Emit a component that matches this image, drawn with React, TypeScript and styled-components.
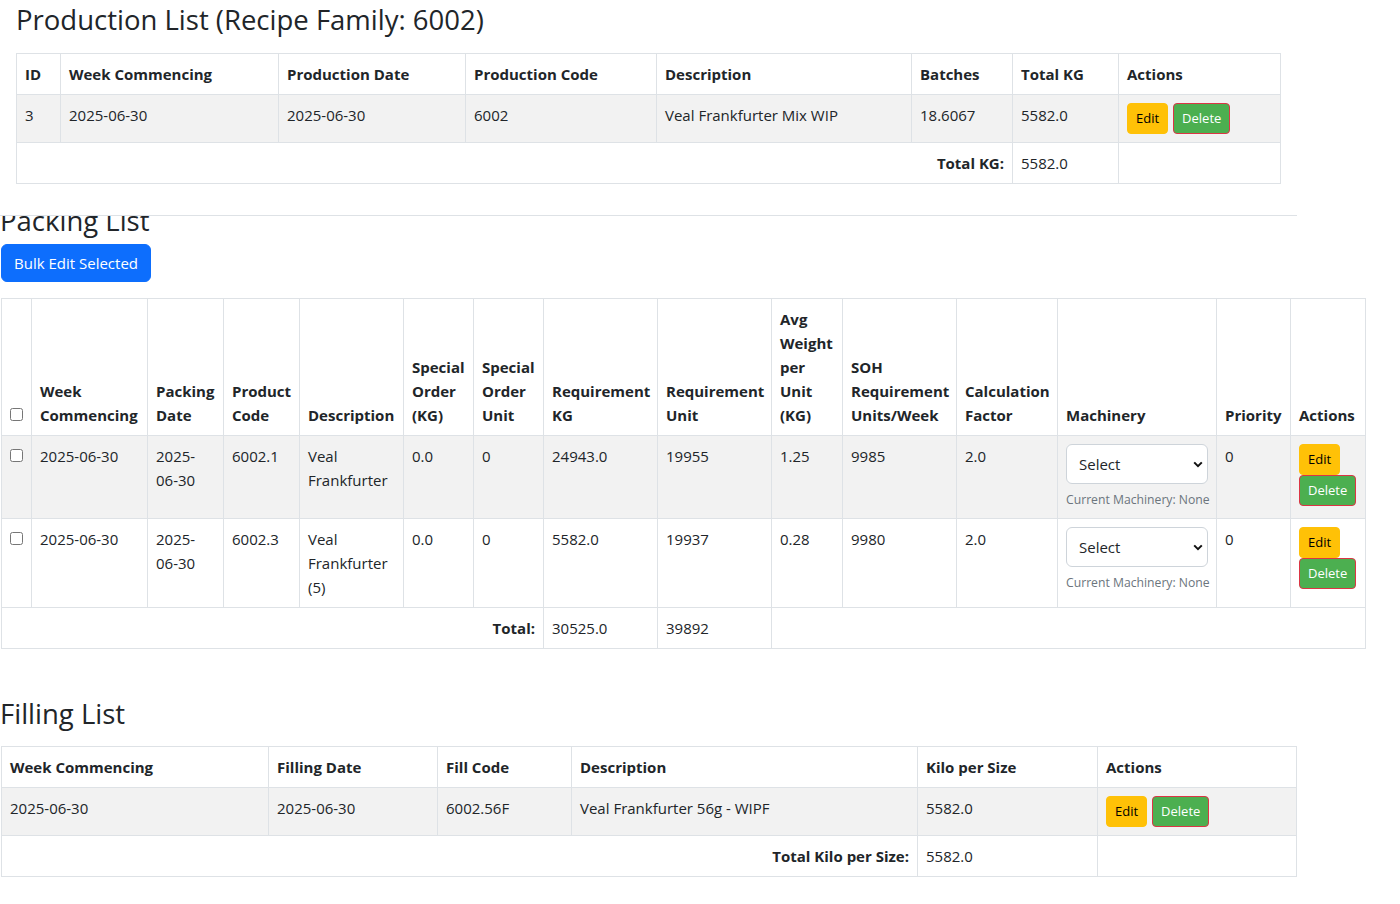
import React from "react";
import styled, { createGlobalStyle } from "styled-components";

const GlobalStyle = createGlobalStyle`
  *, *::before, *::after { box-sizing: border-box; }
  html, body { margin: 0; padding: 0; background: #fff; }
  body {
    font-family: "Open Sans", "Noto Sans", sans-serif;
    font-size: 15px;
    line-height: 1.5;
    color: #212529;
  }
`;

const Page = styled.div`
  width: 1400px;
`;

const ProductionSection = styled.section`
  width: 1297px;
  padding: 3px 16px 31px 16px;
  border-bottom: 1px solid #dee2e6;
`;

const Title = styled.h2<{ $mt?: number; $mb?: number }>`
  margin: ${(p) => p.$mt ?? 0}px 0 ${(p) => p.$mb ?? 0}px;
  font-size: 27.5px;
  font-weight: 500;
  line-height: 34px;
  color: #212529;
`;

const HeadingClip = styled.div`
  height: 22px;
  overflow: hidden;
  margin-left: -1px;
`;

const PackingSection = styled.section`
  padding-left: 1px;
`;

const FillingSection = styled.section`
  padding-left: 1px;
`;

const FillingTitleWrap = styled.div`
  margin-left: -1px;
`;

const PrimaryButton = styled.button`
  display: inline-block;
  margin-top: 6px;
  padding: 6px 12px;
  font-family: inherit;
  font-size: 15px;
  line-height: 24px;
  color: #fff;
  background: #0d6efd;
  border: 1px solid #0d6efd;
  border-radius: 6px;
`;

const Table = styled.table<{ $width: number; $mt?: number }>`
  width: ${(p) => p.$width}px;
  margin-top: ${(p) => p.$mt ?? 0}px;
  border-collapse: collapse;
  table-layout: fixed;
`;

const Col = styled.col<{ $w: number }>`
  width: ${(p) => p.$w}px;
`;

const Row = styled.tr<{ $striped?: boolean }>`
  background: ${(p) => (p.$striped ? "#f2f2f2" : "#fff")};
`;

const Th = styled.th`
  border: 1px solid #dee2e6;
  padding: 8px;
  text-align: left;
  vertical-align: bottom;
  font-weight: 700;
  line-height: 24px;
`;

const Td = styled.td<{ $right?: boolean; $bold?: boolean }>`
  border: 1px solid #dee2e6;
  padding: 8px;
  vertical-align: top;
  line-height: 24px;
  text-align: ${(p) => (p.$right ? "right" : "left")};
  font-weight: ${(p) => (p.$bold ? 700 : 400)};
`;

const Checkbox = styled.input.attrs({ type: "checkbox" })`
  margin: 0;
  width: 13px;
  height: 13px;
`;

const Actions = styled.div`
  display: flex;
  flex-wrap: wrap;
  column-gap: 5px;
  align-items: flex-start;
`;

const SmallButton = styled.button<{ $variant: "edit" | "delete" }>`
  padding: 4px 8px;
  font-family: inherit;
  font-size: 13px;
  line-height: 21px;
  border-radius: 4px;
  border: 1px solid ${(p) => (p.$variant === "edit" ? "#ffc107" : "#dc3545")};
  background: ${(p) => (p.$variant === "edit" ? "#ffc107" : "#4caf50")};
  color: ${(p) => (p.$variant === "edit" ? "#000" : "#fff")};
`;

const SelectWrap = styled.div`
  position: relative;
`;

const Select = styled.select`
  appearance: none;
  -webkit-appearance: none;
  display: block;
  width: 100%;
  height: 40px;
  padding: 0 32px 0 12px;
  font-family: inherit;
  font-size: 15px;
  color: #212529;
  background: #fff;
  border: 1px solid #ced4da;
  border-radius: 6px;
`;

const Chevron = styled.svg`
  position: absolute;
  right: 5px;
  top: 17px;
  pointer-events: none;
`;

const HelpText = styled.div`
  margin-top: 5px;
  font-size: 12.2px;
  line-height: 21px;
  white-space: nowrap;
  color: #6c757d;
`;

const productionCols = [44, 218, 187, 191, 255, 101, 106, 162];
const packingCols = [30, 116, 76, 76, 104, 70, 70, 114, 114, 71, 114, 101, 159, 74, 75];
const fillingCols = [267, 169, 134, 346, 180, 199];

const ActionButtons = () => (
  <Actions>
    <SmallButton $variant="edit">Edit</SmallButton>
    <SmallButton $variant="delete">Delete</SmallButton>
  </Actions>
);

const MachinerySelect = () => (
  <>
    <SelectWrap>
      <Select defaultValue="">
        <option value="">Select</option>
      </Select>
      <Chevron width="10" height="7" viewBox="0 0 10 7">
        <path d="M1.2 1.4 L5 5.2 L8.8 1.4" fill="none" stroke="#111" strokeWidth="2" />
      </Chevron>
    </SelectWrap>
    <HelpText>Current Machinery: None</HelpText>
  </>
);

const packingRows = [
  {
    week: "2025-06-30",
    date: "2025-06-30",
    code: "6002.1",
    desc: "Veal Frankfurter",
    soKg: "0.0",
    soUnit: "0",
    reqKg: "24943.0",
    reqUnit: "19955",
    avg: "1.25",
    soh: "9985",
    calc: "2.0",
    priority: "0",
  },
  {
    week: "2025-06-30",
    date: "2025-06-30",
    code: "6002.3",
    desc: "Veal Frankfurter (5)",
    soKg: "0.0",
    soUnit: "0",
    reqKg: "5582.0",
    reqUnit: "19937",
    avg: "0.28",
    soh: "9980",
    calc: "2.0",
    priority: "0",
  },
];

export default function App() {
  return (
    <Page>
      <GlobalStyle />
      <ProductionSection>
        <Title $mb={16}>Production List (Recipe Family: 6002)</Title>
        <Table $width={1264}>
          <colgroup>
            {productionCols.map((w, i) => (
              <Col key={i} $w={w} />
            ))}
          </colgroup>
          <thead>
            <Row>
              <Th>ID</Th>
              <Th>Week Commencing</Th>
              <Th>Production Date</Th>
              <Th>Production Code</Th>
              <Th>Description</Th>
              <Th>Batches</Th>
              <Th>Total KG</Th>
              <Th>Actions</Th>
            </Row>
          </thead>
          <tbody>
            <Row $striped>
              <Td>3</Td>
              <Td>2025-06-30</Td>
              <Td>2025-06-30</Td>
              <Td>6002</Td>
              <Td>Veal Frankfurter Mix WIP</Td>
              <Td>18.6067</Td>
              <Td>5582.0</Td>
              <Td>
                <ActionButtons />
              </Td>
            </Row>
          </tbody>
          <tfoot>
            <Row>
              <Td colSpan={6} $right $bold>
                Total KG:
              </Td>
              <Td>5582.0</Td>
              <Td />
            </Row>
          </tfoot>
        </Table>
      </ProductionSection>

      <PackingSection>
        <HeadingClip>
          <Title $mt={-12}>Packing List</Title>
        </HeadingClip>
        <PrimaryButton>Bulk Edit Selected</PrimaryButton>
        <Table $width={1364} $mt={16}>
          <colgroup>
            {packingCols.map((w, i) => (
              <Col key={i} $w={w} />
            ))}
          </colgroup>
          <thead>
            <Row>
              <Th>
                <Checkbox />
              </Th>
              <Th>Week Commencing</Th>
              <Th>Packing Date</Th>
              <Th>Product Code</Th>
              <Th>Description</Th>
              <Th>Special Order (KG)</Th>
              <Th>Special Order Unit</Th>
              <Th>Requirement KG</Th>
              <Th>Requirement Unit</Th>
              <Th>Avg Weight per Unit (KG)</Th>
              <Th>SOH Requirement Units/Week</Th>
              <Th>Calculation Factor</Th>
              <Th>Machinery</Th>
              <Th>Priority</Th>
              <Th>Actions</Th>
            </Row>
          </thead>
          <tbody>
            {packingRows.map((r, i) => (
              <Row key={i} $striped={i % 2 === 0}>
                <Td>
                  <Checkbox />
                </Td>
                <Td>{r.week}</Td>
                <Td>{r.date}</Td>
                <Td>{r.code}</Td>
                <Td>{r.desc}</Td>
                <Td>{r.soKg}</Td>
                <Td>{r.soUnit}</Td>
                <Td>{r.reqKg}</Td>
                <Td>{r.reqUnit}</Td>
                <Td>{r.avg}</Td>
                <Td>{r.soh}</Td>
                <Td>{r.calc}</Td>
                <Td>
                  <MachinerySelect />
                </Td>
                <Td>{r.priority}</Td>
                <Td>
                  <ActionButtons />
                </Td>
              </Row>
            ))}
          </tbody>
          <tfoot>
            <Row>
              <Td colSpan={7} $right $bold>
                Total:
              </Td>
              <Td>30525.0</Td>
              <Td>39892</Td>
              <Td colSpan={6} />
            </Row>
          </tfoot>
        </Table>
      </PackingSection>

      <FillingSection>
        <FillingTitleWrap>
          <Title $mt={48} $mb={15}>
            Filling List
          </Title>
        </FillingTitleWrap>
        <Table $width={1295}>
          <colgroup>
            {fillingCols.map((w, i) => (
              <Col key={i} $w={w} />
            ))}
          </colgroup>
          <thead>
            <Row>
              <Th>Week Commencing</Th>
              <Th>Filling Date</Th>
              <Th>Fill Code</Th>
              <Th>Description</Th>
              <Th>Kilo per Size</Th>
              <Th>Actions</Th>
            </Row>
          </thead>
          <tbody>
            <Row $striped>
              <Td>2025-06-30</Td>
              <Td>2025-06-30</Td>
              <Td>6002.56F</Td>
              <Td>Veal Frankfurter 56g - WIPF</Td>
              <Td>5582.0</Td>
              <Td>
                <ActionButtons />
              </Td>
            </Row>
          </tbody>
          <tfoot>
            <Row>
              <Td colSpan={4} $right $bold>
                Total Kilo per Size:
              </Td>
              <Td>5582.0</Td>
              <Td />
            </Row>
          </tfoot>
        </Table>
      </FillingSection>
    </Page>
  );
}
